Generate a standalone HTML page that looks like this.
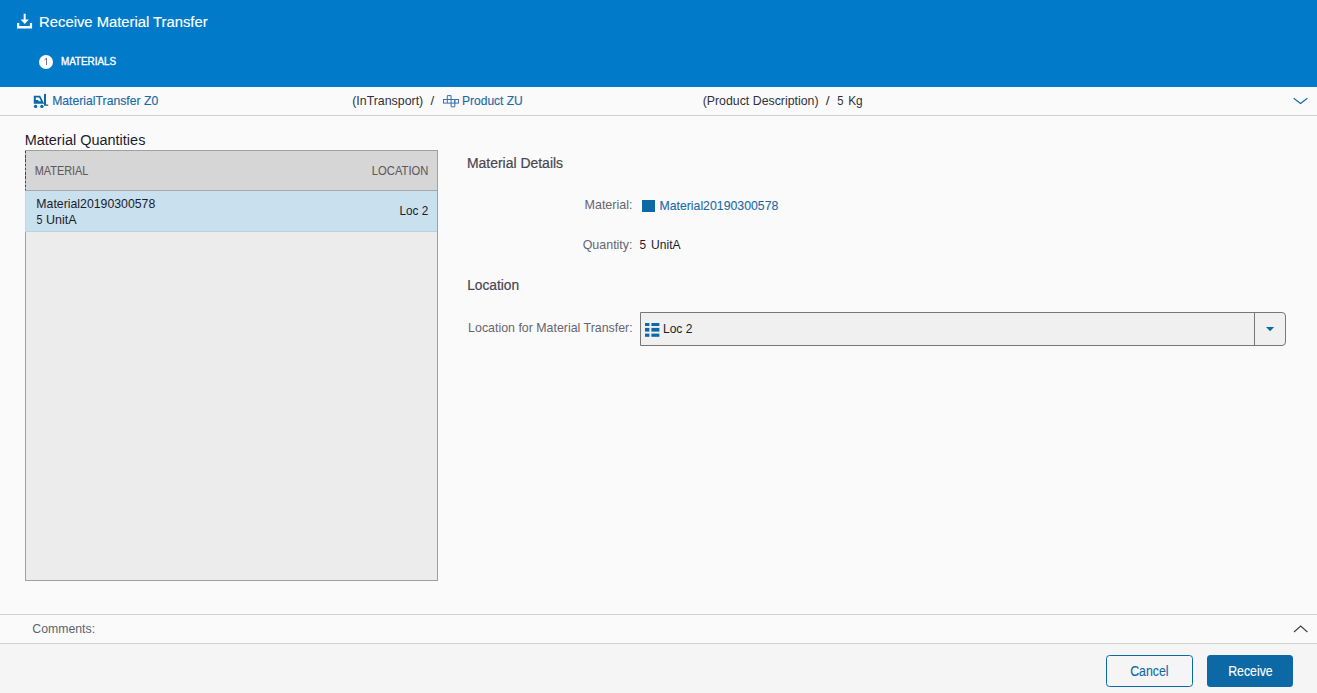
<!DOCTYPE html>
<html><head><meta charset="utf-8"><title>Receive Material Transfer</title>
<style>
html,body{margin:0;padding:0;}
body{width:1317px;height:693px;overflow:hidden;background:#fafafa;position:relative;font-family:"Liberation Sans",sans-serif;}
.abs{position:absolute;}
.t{position:absolute;left:0;top:0;line-height:1;white-space:pre;transform-origin:0 0;}
#hdr{left:0;top:0;width:1317px;height:87px;background:#007ac9;}
#strip{left:0;top:87px;width:1317px;height:28px;background:#fafafa;border-bottom:1px solid #cfcfcf;}
#stepc{left:39px;top:55px;width:14px;height:14px;border-radius:50%;background:#fff;}
#panel{left:25px;top:150px;width:411px;height:429px;border:1px solid #a0a0a0;background:#ececec;}
#phead{left:26px;top:151px;width:411px;height:39px;background:#d6d6d6;border-bottom:1px solid #a8a8a8;}
#pdash{left:25px;top:151px;width:1px;height:39px;background:repeating-linear-gradient(to bottom,#444 0,#444 2.3px,#a8a8a8 2.3px,#a8a8a8 4.25px);}
#prow{left:25px;top:191px;width:412px;height:40px;background:#c9e0ef;border-bottom:1px solid #b9d3e4;box-shadow:inset 1px 0 0 #bfd9ea;}
#sq{left:642px;top:200px;width:13px;height:12px;background:#0d69a5;}
#sel{left:640px;top:312px;width:644px;height:32px;border:1px solid #777;background:#f0f0f0;border-radius:0 4px 4px 0;}
#selsep{left:1254px;top:313px;width:1px;height:32px;background:#777;}
#sep1{left:0;top:614px;width:1317px;height:1px;background:#d2d2d2;}
#sep2{left:0;top:643px;width:1317px;height:1px;background:#d2d2d2;}
#foot{left:0;top:644px;width:1317px;height:49px;background:#f5f5f5;}
#bcancel{left:1106px;top:655px;width:85px;height:30px;border:1px solid #0d69a5;border-radius:3.5px;background:#f5f5f5;}
#brecv{left:1207px;top:655px;width:86px;height:32px;border-radius:3.5px;background:#0d69a5;}
svg{position:absolute;left:0;top:0;}
</style></head>
<body>
<div id="hdr" class="abs"></div>
<div id="strip" class="abs"></div>
<div id="stepc" class="abs"></div>
<div id="panel" class="abs"></div>
<div id="phead" class="abs"></div>
<div id="pdash" class="abs"></div>
<div id="prow" class="abs"></div>
<div id="sq" class="abs"></div>
<div id="sel" class="abs"></div>
<div id="selsep" class="abs"></div>
<div id="foot" class="abs"></div>
<div id="sep1" class="abs"></div>
<div id="sep2" class="abs"></div>
<div id="bcancel" class="abs"></div>
<div id="brecv" class="abs"></div>
<svg width="1317" height="693" viewBox="0 0 1317 693">
<!-- download icon -->
<g fill="#fff">
<rect x="23.7" y="13.7" width="2" height="7"/>
<path d="M20.6 19.4 H28.8 L24.7 23.9 Z"/>
<path d="M17.1 23 H19.3 V25.9 H29.9 V23 H32.1 V28.4 H17.1 Z"/>
</g>
<!-- step number -->
<path d="M44.3 60 L46.5 58.2 V65.1" fill="none" stroke="#6a6690" stroke-width="0.95"/>
<!-- forklift -->
<g fill="#0d69a5">
<path fill-rule="evenodd" d="M33.8 95.8 H40.2 L44.2 103.8 H33.8 Z M35.8 97.6 V100 H38 L38.8 101.3 H41 L39.2 97.6 Z"/>
<rect x="44" y="93.9" width="2" height="11.8"/>
<rect x="46" y="104.5" width="2.2" height="1.3"/>
<circle cx="35.6" cy="106.4" r="1.7"/>
<circle cx="41.9" cy="106.4" r="1.7"/>
</g>
<!-- product icon -->
<g fill="none" stroke="#3a70b0" stroke-width="1">
<rect x="443.5" y="99.5" width="15" height="3.6"/>
<path d="M447.3 99.5 V95.6 H451.1 V103.1 M454.8 99.5 V106.8 H451.1 V103.1"/>
<path d="M447.3 99.5 V103.1 M454.8 99.5 V103.1"/>
</g>
<!-- chevrons -->
<path d="M1293.7 98.2 L1300.55 103.5 L1307.4 98.2" fill="none" stroke="#0d69a5" stroke-width="1.15"/>
<path d="M1294 632 L1300.7 626 L1307.4 632" fill="none" stroke="#444" stroke-width="1.2"/>
<!-- select arrow -->
<path d="M1266 327 H1274.2 L1270.1 331.2 Z" fill="#0d69a5"/>
<!-- location icon -->
<g fill="#0d69a5">
<rect x="645" y="323" width="4.4" height="3"/><rect x="651.4" y="323" width="8" height="3"/>
<rect x="645" y="327.9" width="4.4" height="3.7"/><rect x="651.4" y="327.9" width="8" height="3.7"/>
<rect x="645" y="333.6" width="4.4" height="3.2"/><rect x="651.4" y="333.6" width="8" height="3.2"/>
</g>
</svg>
<span id="t_title" class="t" style="font-size:13.97px;color:#ffffff;-webkit-text-stroke:0.15px #ffffff;transform:translate(39.11px,16.17px) scaleX(1.0587)">Receive Material Transfer</span>
<span id="t_step" class="t" style="font-size:11.17px;color:#ffffff;-webkit-text-stroke:0.4px #ffffff;transform:translate(60.89px,55.54px) scaleX(0.8864)">MATERIALS</span>
<span id="t_mt" class="t" style="font-size:12.57px;color:#1a6aa8;-webkit-text-stroke:0.15px #1a6aa8;transform:translate(52.16px,95.36px) scaleX(0.9715)">MaterialTransfer Z0</span>
<span id="t_intr" class="t" style="font-size:12.57px;color:#30303c;transform:translate(352.22px,95.36px) scaleX(0.9844)">(InTransport)</span>
<span id="t_sl1" class="t" style="font-size:12.57px;color:#30303c;transform:translate(430.44px,95.36px) scaleX(1.0616)">/</span>
<span id="t_prod" class="t" style="font-size:12.57px;color:#1a6aa8;-webkit-text-stroke:0.15px #1a6aa8;transform:translate(462.12px,95.36px) scaleX(0.9547)">Product ZU</span>
<span id="t_pd" class="t" style="font-size:12.57px;color:#30303c;transform:translate(702.65px,95.36px) scaleX(0.9826)">(Product Description)</span>
<span id="t_sl2" class="t" style="font-size:12.57px;color:#30303c;transform:translate(825.66px,95.36px) scaleX(1.1059)">/</span>
<span id="t_kg5" class="t" style="font-size:12.57px;color:#30303c;transform:translate(837.20px,95.36px) scaleX(0.8941)">5</span>
<span id="t_kgk" class="t" style="font-size:12.57px;color:#30303c;transform:translate(848.20px,95.36px) scaleX(0.9429)">Kg</span>
<span id="t_mq" class="t" style="font-size:13.97px;color:#1c1c2c;transform:translate(24.66px,134.17px) scaleX(1.0365)">Material Quantities</span>
<span id="t_hmat" class="t" style="font-size:12.57px;color:#625a5a;-webkit-text-stroke:0.1px #625a5a;transform:translate(34.76px,165.36px) scaleX(0.8669)">MATERIAL</span>
<span id="t_hloc" class="t" style="font-size:12.57px;color:#625a5a;-webkit-text-stroke:0.1px #625a5a;transform:translate(371.87px,165.36px) scaleX(0.8915)">LOCATION</span>
<span id="t_rmat" class="t" style="font-size:12.57px;color:#1c1c2c;transform:translate(36.35px,198.36px) scaleX(0.9781)">Material20190300578</span>
<span id="t_runit5" class="t" style="font-size:12.57px;color:#1c1c2c;transform:translate(36.56px,214.36px) scaleX(0.8492)">5</span>
<span id="t_runitu" class="t" style="font-size:12.57px;color:#1c1c2c;transform:translate(45.90px,214.36px) scaleX(0.9955)">UnitA</span>
<span id="t_rloc" class="t" style="font-size:12.57px;color:#1c1c2c;transform:translate(399.46px,205.36px) scaleX(0.9364)">Loc 2</span>
<span id="t_md" class="t" style="font-size:13.97px;color:#4a4650;-webkit-text-stroke:0.2px #4a4650;transform:translate(466.90px,157.17px) scaleX(0.9990)">Material Details</span>
<span id="t_lmat" class="t" style="font-size:12.57px;color:#666670;transform:translate(584.46px,199.36px) scaleX(0.9984)">Material:</span>
<span id="t_vmat" class="t" style="font-size:12.57px;color:#1a6aa8;-webkit-text-stroke:0.1px #1a6aa8;transform:translate(659.39px,200.36px) scaleX(0.9786)">Material20190300578</span>
<span id="t_lqty" class="t" style="font-size:12.57px;color:#666670;transform:translate(582.69px,239.36px) scaleX(0.9905)">Quantity:</span>
<span id="t_vqty5" class="t" style="font-size:12.57px;color:#1c1c2c;transform:translate(639.62px,239.36px) scaleX(0.9414)">5</span>
<span id="t_vqtyu" class="t" style="font-size:12.57px;color:#1c1c2c;transform:translate(651.12px,239.36px) scaleX(0.9612)">UnitA</span>
<span id="t_loc" class="t" style="font-size:13.97px;color:#4a4650;-webkit-text-stroke:0.2px #4a4650;transform:translate(467.19px,279.17px) scaleX(0.9840)">Location</span>
<span id="t_lfm" class="t" style="font-size:12.57px;color:#666670;transform:translate(468.11px,322.36px) scaleX(0.9859)">Location for Material Transfer:</span>
<span id="t_sel" class="t" style="font-size:12.57px;color:#1c1c2c;transform:translate(662.94px,323.36px) scaleX(0.9570)">Loc 2</span>
<span id="t_com" class="t" style="font-size:12.57px;color:#5a6570;transform:translate(32.29px,623.36px) scaleX(0.9777)">Comments:</span>
<span id="t_cancel" class="t" style="font-size:13.97px;color:#0d69a5;-webkit-text-stroke:0.1px #0d69a5;transform:translate(1130.19px,665.17px) scaleX(0.8824)">Cancel</span>
<span id="t_recv" class="t" style="font-size:13.97px;color:#ffffff;-webkit-text-stroke:0.15px #ffffff;transform:translate(1228.23px,665.17px) scaleX(0.8807)">Receive</span>
</body></html>
